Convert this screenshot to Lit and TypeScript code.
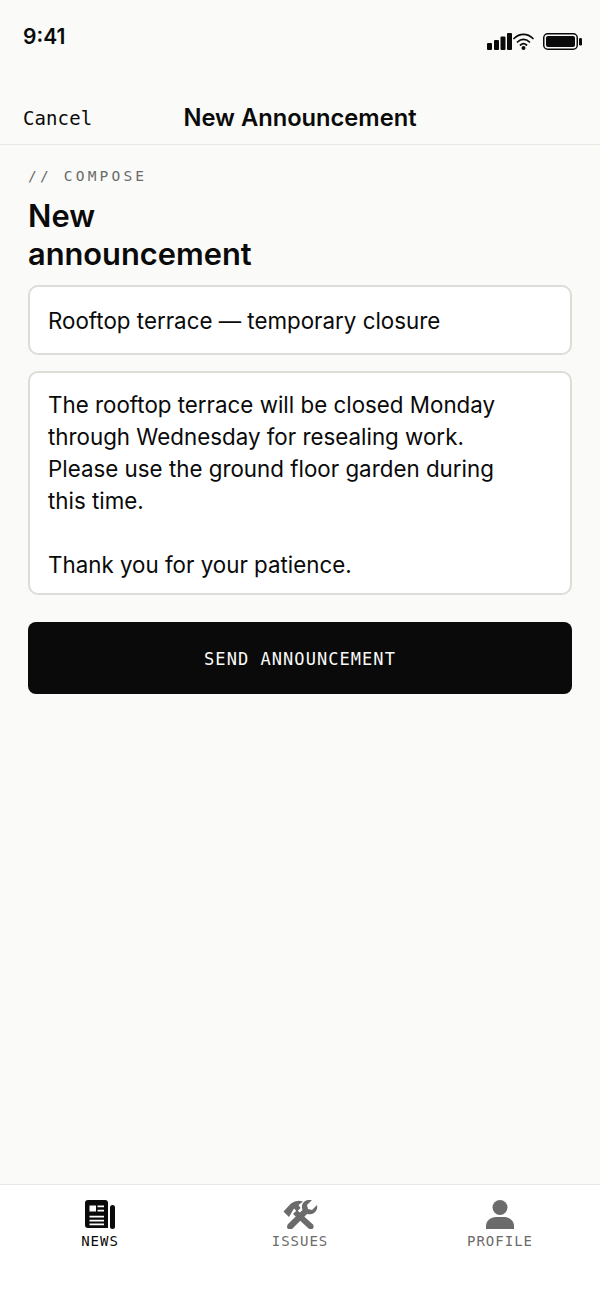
import { LitElement, css, html, svg } from 'lit';
import { customElement } from 'lit/decorators.js';

const newsIcon = svg`
  <path fill-rule="evenodd" d="M3 0h17a3 3 0 0 1 3 3v25H3a3 3 0 0 1-3-3V3a3 3 0 0 1 3-3z
    M4.500 5.500v6h6.500v-6z M12.500 5.500v1.800h6.500v-1.800z M12.500 9.700v1.800h6.500v-1.800z
    M4.500 15.800v1.800h14.500v-1.800z M4.500 19.800v1.800h14.500v-1.800z M4.500 23.500v1.800h14.500v-1.800z"/>
  <rect x="25" y="5" width="5" height="24" rx="2.500"/>`;

const toolsIcon = svg`
  <path d="M0.500 11.500 L8 3.500 Q13 -0.500 20 1.500 L15.500 5 L17.500 8 L14 11.500 L11 8.500 L6 17 Z"/>
  <path d="M10 14 L14 10 L30 24.500 Q31.500 27 29.500 29 Q27 30 25 28 Z"/>
  <path d="M34 5 L29 10 L25 9 L24 5 L29 0 Q23 -1 20 3 Q18 6 19.500 10 L5 24 Q3 27 5 29 Q8 31 10 28 L24 14 Q28 15 31 13 Q35 10 34 5 Z"/>`;

const personIcon = svg`
  <circle cx="14" cy="7.500" r="7.500"/>
  <path d="M0 29v-3c0-5.500 5-9 10-9h8c5 0 10 3.500 10 9v3z"/>`;

@customElement( 'app-root' )
export class AppRoot extends LitElement {
   render() {
      return html`
      <div class="status">
        <span class="time">9:41</span>
        <div class="status-icons">
          <svg width="25" height="17" viewBox="0 0 25 17">
            <rect x="0" y="10" width="5" height="7" rx="1"/>
            <rect x="7" y="7" width="5" height="10" rx="1"/>
            <rect x="13.500" y="3.500" width="5" height="13.500" rx="1"/>
            <rect x="20" y="0" width="5" height="17" rx="1"/>
          </svg>
          <svg class="wifi" width="21" height="18" viewBox="0 0 21 18">
            <path d="M1 6.500C6.500 1 14.500 1 20 6.500M4.500 10C8 6.500 13 6.500 16.500 10M7.500 13c2-1.800 4-1.800 6 0" fill="none" stroke="#0a0a0a" stroke-width="1.700" stroke-linecap="round"/>
            <circle cx="10.500" cy="16" r="2"/>
          </svg>
          <svg class="battery" width="39" height="17" viewBox="0 0 39 17">
            <rect x="0.750" y="0.750" width="33.500" height="15.500" rx="4" fill="none" stroke="#0a0a0a" stroke-width="1.500"/>
            <rect x="3" y="3" width="29" height="11" rx="2"/>
            <rect x="36" y="5" width="3" height="7.500" rx="1.200"/>
          </svg>
        </div>
      </div>

      <header class="nav">
        <span class="cancel">Cancel</span>
        <span class="nav-title">New Announcement</span>
      </header>

      <main class="content">
        <div class="eyebrow">// COMPOSE</div>
        <h1 class="heading">New<br>announcement</h1>
        <div class="field subject">Rooftop terrace — temporary closure</div>
        <div class="field message">The rooftop terrace will be closed Monday
through Wednesday for resealing work.
Please use the ground floor garden during
this time.

Thank you for your patience.</div>
        <button class="send">SEND ANNOUNCEMENT</button>
      </main>

      <nav class="tabs">
        <div class="tab active">
          <svg width="30" height="29" viewBox="0 0 30 29">${ newsIcon }</svg>
          <span>NEWS</span>
        </div>
        <div class="tab">
          <svg width="35" height="29" viewBox="0 0 35 29">${ toolsIcon }</svg>
          <span>ISSUES</span>
        </div>
        <div class="tab">
          <svg width="28" height="29" viewBox="0 0 28 29">${ personIcon }</svg>
          <span>PROFILE</span>
        </div>
      </nav>
    `;
   }

   static styles = css`
  :host {
    display: flex;
    flex-direction: column;
    width: 600px;
    height: 1300px;
    background: #fafaf8;
    color: #0a0a0a;
    font-family: Inter, "Liberation Sans", sans-serif;
  }
  .status {
    height: 72px;
    padding: 0 18px 0 23px;
    box-sizing: border-box;
    display: flex;
    justify-content: space-between;
    align-items: flex-start;
  }
  .time {
    margin-top: 23px;
    font-size: 21px;
    line-height: 28px;
    font-weight: 600;
  }
  .status-icons {
    margin-top: 33px;
    display: flex;
    align-items: flex-start;
    fill: #0a0a0a;
  }
  .wifi { margin-left: 1px; margin-top: -1px; }
  .battery { margin-left: 9px; }
  .nav {
    height: 73px;
    box-sizing: border-box;
    padding: 19px 23px 0;
    border-bottom: 1px solid #e8e8e4;
    display: grid;
    grid-template-columns: 1fr auto 1fr;
    align-items: center;
  }
  .cancel {
    font-family: "DejaVu Sans Mono", "Liberation Mono", monospace;
    font-size: 19px;
    letter-spacing: 0.1px;
  }
  .nav-title {
    font-size: 23.700px;
    font-weight: 600;
    line-height: 30px;
  }
  .content {
    flex: 1;
    padding: 21px 28px 0;
    display: flex;
    flex-direction: column;
  }
  .eyebrow {
    font-family: "DejaVu Sans Mono", "Liberation Mono", monospace;
    font-size: 14.500px;
    line-height: 20px;
    letter-spacing: 3.200px;
    color: #6b6b6b;
  }
  .heading {
    margin: 11px 0 12px;
    font-size: 30.800px;
    line-height: 38px;
    font-weight: 600;
  }
  .field {
    box-sizing: border-box;
    background: #fff;
    border: 2px solid #dddcd7;
    border-radius: 10px;
    padding: 0 18px;
    font-size: 22.350px;
    line-height: 32px;
  }
  .subject {
    height: 70px;
    display: flex;
    align-items: center;
    padding-top: 2px;
  }
  .message {
    margin-top: 16px;
    height: 224px;
    padding-top: 16px;
    white-space: pre-line;
  }
  .send {
    margin-top: 27px;
    height: 72px;
    border: none;
    border-radius: 8px;
    padding: 2px 0 0;
    background: #0a0a0a;
    color: #fafaf8;
    font-family: "DejaVu Sans Mono", "Liberation Mono", monospace;
    font-size: 17px;
    letter-spacing: 1.050px;
  }
  .tabs {
    height: 116px;
    box-sizing: border-box;
    background: #fff;
    border-top: 1px solid #e8e8e4;
    padding-top: 15px;
    display: grid;
    grid-template-columns: repeat(3, 1fr);
  }
  .tab {
    display: flex;
    flex-direction: column;
    align-items: center;
    fill: #6b6b6b;
    color: #6b6b6b;
  }
  .tab span {
    margin-top: 2px;
    font-family: "DejaVu Sans Mono", "Liberation Mono", monospace;
    font-size: 14px;
    line-height: 20px;
    letter-spacing: 1px;
  }
  .tab.active {
    fill: #0a0a0a;
    color: #0a0a0a;
  }
  `;
}

declare global {
   interface HTMLElementTagNameMap {
      'app-root': AppRoot;
   }
};
